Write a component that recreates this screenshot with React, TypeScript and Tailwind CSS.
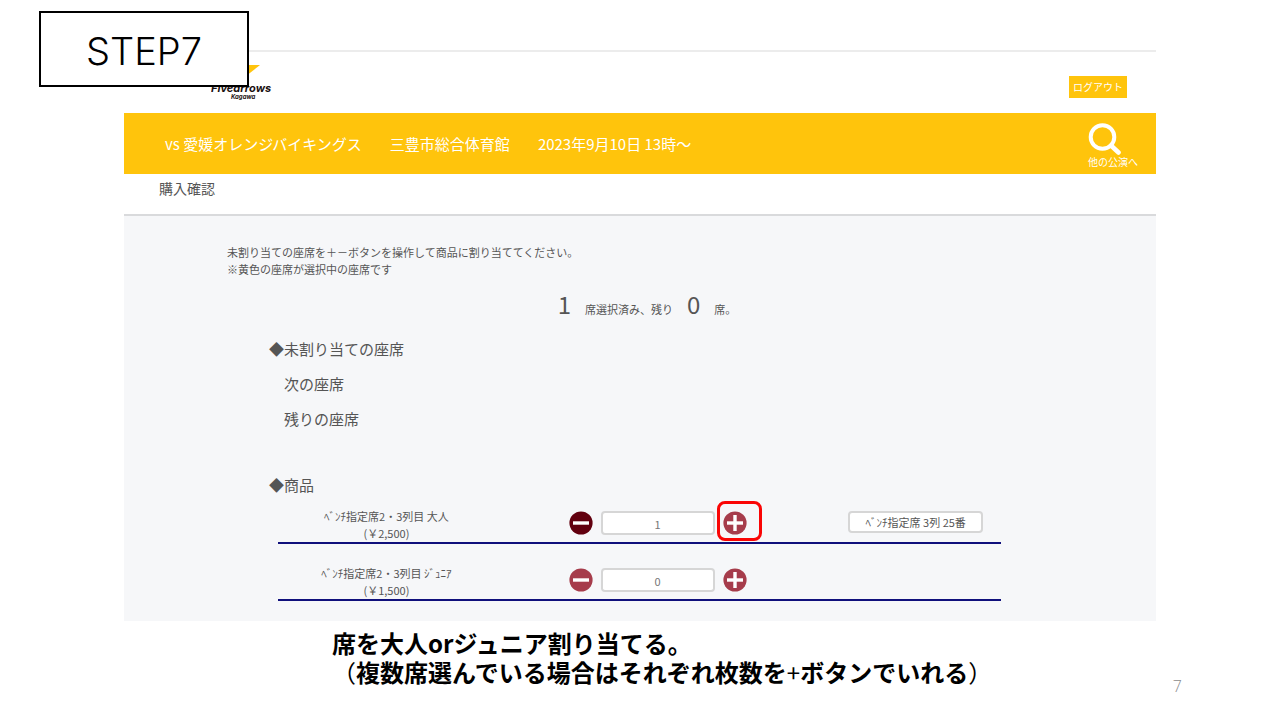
import React, { useState } from "react";

type Product = {
  id: string;
  name: string;
  price: string;
  count: number;
  minusActive: boolean;
  highlight: boolean;
  seat?: string;
};

const PRODUCTS: Product[] = [
  {
    id: "adult",
    name: "ﾍﾞﾝﾁ指定席2・3列目 大人",
    price: "(￥2,500)",
    count: 1,
    minusActive: true,
    highlight: true,
    seat: "ﾍﾞﾝﾁ指定席 3列 25番",
  },
  {
    id: "junior",
    name: "ﾍﾞﾝﾁ指定席2・3列目 ｼﾞｭﾆｱ",
    price: "(￥1,500)",
    count: 0,
    minusActive: false,
    highlight: false,
  },
];

function CircleIcon({ plus }: { plus?: boolean }) {
  return (
    <svg viewBox="0 0 24 24" className="block size-6" aria-hidden="true">
      <circle cx="12" cy="12" r="11.6" fill="currentColor" />
      <rect x="4" y="10.3" width="16" height="3.4" fill="#fff" />
      {plus ? <rect x="10.3" y="4" width="3.4" height="16" fill="#fff" /> : null}
    </svg>
  );
}

function Logo() {
  return (
    <svg viewBox="0 0 72 38" className="h-[38px] w-[72px]" role="img" aria-label="Fivearrows Kagawa">
      <path d="M26 1H49L35 12Z" fill="#ffc40c" />
      <text x="0" y="28" fontSize="11" fill="#1a1010" className="font-['Inter',sans-serif] font-bold italic">
        Fivearrows
      </text>
      <text x="20" y="35" fontSize="6" fill="#1a1010" className="font-['Inter',sans-serif] font-bold italic">
        Kagawa
      </text>
    </svg>
  );
}

function Header() {
  return (
    <header className="flex h-[63px] items-center justify-between border-t-2 border-[#ececec] pr-[29px] pl-[87px]">
      <Logo />
      <button type="button" className="mt-2 h-[22px] bg-[#ffc40c] px-1 text-[10px] leading-[22px] text-white">
        ログアウト
      </button>
    </header>
  );
}

function EventBar() {
  return (
    <div className="flex h-[61px] items-center justify-between bg-[#ffc40c] pr-[18px] pl-[41px] text-white">
      <div className="flex gap-7 text-[15px] leading-6">
        <span>vs 愛媛オレンジバイキングス</span>
        <span>三豊市総合体育館</span>
        <span>2023年9月10日 13時～</span>
      </div>
      <a href="#" className="pt-1 text-[10px] leading-[14px]">
        <svg viewBox="0 0 34 33" className="block h-[33px] w-[34px]" fill="none" stroke="#fff" aria-hidden="true">
          <circle cx="14.5" cy="15" r="11.8" strokeWidth="4" />
          <path d="M23 23.5 30.5 30.5" strokeWidth="4.6" strokeLinecap="round" />
        </svg>
        他の公演へ
      </a>
    </div>
  );
}

function ProductRow({ product }: { product: Product }) {
  const [count, setCount] = useState(product.count);

  return (
    <li className="grid grid-cols-[30%_45%_25%] items-start border-b-2 border-[#10107c]">
      <label htmlFor={product.id} className="text-center text-[11px] leading-[17px]">
        {product.name}
        <br />
        {product.price}
      </label>
      <div className="flex items-center justify-center gap-2 pt-[3px]">
        <button
          type="button"
          aria-label="減らす"
          onClick={() => setCount(Math.max(0, count - 1))}
          className={product.minusActive ? "text-[#62000f]" : "text-[#a63c4b]"}
        >
          <CircleIcon />
        </button>
        <input
          id={product.id}
          type="text"
          value={count}
          readOnly
          className="h-6 w-[114px] rounded border-2 border-[#d6d6d6] bg-white pt-0.5 text-center text-[11px] text-[#777]"
        />
        <button
          type="button"
          aria-label="増やす"
          onClick={() => setCount(count + 1)}
          className="relative text-[#a63c4b]"
        >
          <CircleIcon plus />
          {product.highlight ? (
            <span className="absolute -top-2.5 -left-1.5 h-10 w-[45px] rounded-lg border-3 border-[#fa0505]" />
          ) : null}
        </button>
      </div>
      {product.seat ? (
        <div className="pt-[3px] pl-7">
          <button
            type="button"
            className="block h-[22px] w-[135px] rounded border-2 border-[#d6d6d6] bg-white text-[11px] leading-[18px]"
          >
            {product.seat}
          </button>
        </div>
      ) : null}
    </li>
  );
}

function SeatPanel() {
  return (
    <section className="bg-[#f6f7f9] pt-7 pb-5 text-[#555]">
      <p className="pl-[103px] text-[11px] leading-[17px]">
        未割り当ての座席を＋－ボタンを操作して商品に割り当ててください。
        <br />
        ※黄色の座席が選択中の座席です
      </p>
      <p className="mt-2.5 flex items-baseline justify-center gap-3.5 pl-3.5 text-[11px] leading-8">
        <span className="text-2xl leading-8">1</span>
        <span>席選択済み、残り</span>
        <span className="text-2xl leading-8">0</span>
        <span>席。</span>
      </p>
      <div className="mt-1.5 pl-[145px] text-[15px] leading-[35px]">
        <h2>◆未割り当ての座席</h2>
        <p className="pl-[15px]">次の座席</p>
        <p className="pl-[15px]">残りの座席</p>
      </div>
      <h2 className="mt-[31px] pl-[145px] text-[15px] leading-[35px]">◆商品</h2>
      <ul className="mr-[155px] ml-[154px] flex flex-col gap-[21px] pt-1.5">
        {PRODUCTS.map((product) => (
          <ProductRow key={product.id} product={product} />
        ))}
      </ul>
    </section>
  );
}

export default function App() {
  return (
    <div className="relative min-h-screen bg-white font-['Noto_Sans_CJK_JP',sans-serif]">
      <main className="px-[124px] pt-[50px]">
        <Header />
        <EventBar />
        <h1 className="h-[42px] border-b-2 border-[#d9dadc] pl-[35px] text-sm leading-7 text-[#555]">購入確認</h1>
        <SeatPanel />
      </main>
      <footer className="flex items-end justify-between pt-[7px] pr-[98px] pl-[332px]">
        <p className="pb-3 text-2xl leading-[29px] font-bold text-black">
          席を大人orジュニア割り当てる。
          <br />
          <span className="font-normal">（</span>複数席選んでいる場合はそれぞれ枚数を
          <span className="font-normal">+</span>ボタンでいれる<span className="font-normal">）</span>
        </p>
        <span className="font-['Open_Sans',sans-serif] text-base font-light text-[#8b8b8b]">7</span>
      </footer>
      <div className="absolute top-[11px] left-[39px] flex h-[76px] w-[210px] items-center justify-center border-2 border-black bg-white pt-1 font-['Inter',sans-serif] text-[38px] font-light text-black">
        STEP7
      </div>
    </div>
  );
}
